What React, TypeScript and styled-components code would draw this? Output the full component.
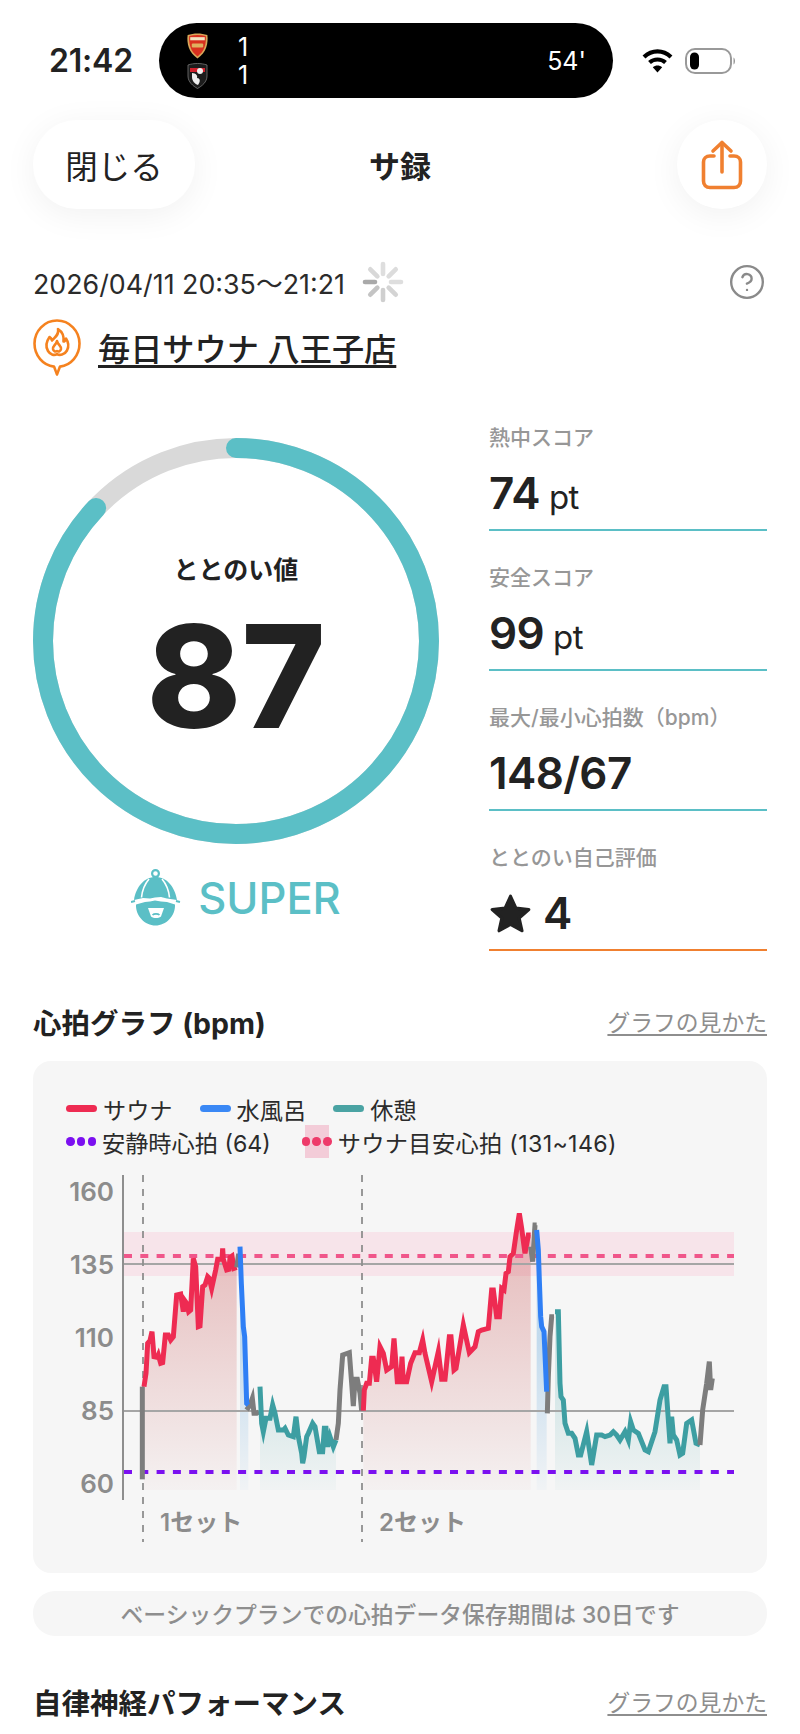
import React from "react";
import styled, { createGlobalStyle } from "styled-components";
import { CircleHelp } from "lucide-react";

const GlobalStyle = createGlobalStyle`
  html, body {
    margin: 0;
    padding: 0;
    background: #fff;
    overflow: hidden;
  }
  * { box-sizing: border-box; }
  body {
    font-family: Inter, "Noto Sans CJK JP", sans-serif;
    color: #222;
  }
`;

const Page = styled.div`
  width: 800px;
  height: 1734px;
  overflow: hidden;
  padding-top: 23px;
`;

const StatusBar = styled.div`
  height: 75px;
  display: flex;
  align-items: center;
  padding-left: 49px;
`;

const Clock = styled.div`
  width: 110px;
  font-size: 32px;
  font-weight: 600;
  letter-spacing: -0.2px;
`;

const Island = styled.div`
  width: 454px;
  height: 75px;
  border-radius: 38px;
  background: #000;
  color: #fff;
  display: flex;
  align-items: center;
  padding: 0 27px;
  font-size: 25px;
`;

const Crests = styled.div`
  display: flex;
  flex-direction: column;
  gap: 4px;
  width: 52px;
`;

const Scores = styled.div`
  display: flex;
  flex-direction: column;
  line-height: 28px;
  flex: 1;
`;

const StatusIcons = styled.div`
  margin-left: 29px;
  display: flex;
  align-items: center;
  gap: 12px;
`;

const TopBar = styled.header`
  margin-top: 22px;
  padding: 0 33px;
  height: 89px;
  display: grid;
  grid-template-columns: 1fr auto 1fr;
  align-items: center;
`;

const CloseButton = styled.div`
  width: 162px;
  height: 89px;
  border-radius: 44px;
  background: #fff;
  box-shadow: 0 6px 34px rgba(0, 0, 0, 0.06);
  display: flex;
  align-items: center;
  justify-content: center;
  font-size: 32.5px;
`;

const Title = styled.div`
  font-size: 31px;
  font-weight: 700;
`;

const ShareButton = styled.div`
  justify-self: end;
  width: 90px;
  height: 89px;
  border-radius: 45px;
  background: #fff;
  box-shadow: 0 6px 34px rgba(0, 0, 0, 0.06);
  display: flex;
  align-items: center;
  justify-content: center;
`;

const Content = styled.main`
  padding: 0 33px;
`;

const DateRow = styled.div`
  margin-top: 52px;
  height: 42px;
  display: flex;
  align-items: center;
  font-size: 26.8px;
  color: #2b2b2b;
`;

const Help = styled(CircleHelp)`
  margin-left: auto;
  margin-right: 1px;
  color: #8a8a8a;
`;

const Spinner = styled.svg`
  margin-left: 17px;
`;

const PlaceRow = styled.div`
  margin-top: 16px;
  display: flex;
  align-items: flex-start;
  gap: 17px;
  height: 56px;
`;

const PlaceName = styled.span`
  margin-top: 8px;
  font-size: 32.2px;
  font-weight: 500;
  line-height: 46px;
  text-decoration: underline;
  text-decoration-thickness: 3px;
  text-underline-offset: 4px;
  color: #222;
`;

const ScoreRow = styled.section`
  margin-top: 16px;
  display: flex;
  justify-content: space-between;
`;

const RingColumn = styled.div`
  width: 406px;
  padding-top: 46px;
`;

const RingWrap = styled.div`
  display: grid;
  width: 406px;
  height: 408px;
  > * {
    grid-area: 1 / 1;
  }
`;

const RingText = styled.div`
  display: flex;
  flex-direction: column;
  align-items: center;
`;

const RingLabel = styled.div`
  margin-top: 115px;
  font-size: 25px;
  font-weight: 700;
  line-height: 36px;
`;

const RingValue = styled.div`
  margin-top: 28px;
  font-size: 143px;
  font-weight: 800;
  line-height: 120px;
`;

const Grade = styled.div`
  margin-top: 24px;
  display: flex;
  justify-content: center;
  align-items: center;
  gap: 17px;
  color: #5bbfc6;
  font-size: 43.5px;
  font-weight: 500;
`;

const StatColumn = styled.div`
  width: 278px;
  display: flex;
  flex-direction: column;
`;

const Stat = styled.div<{ $accent: string }>`
  height: 140px;
  padding-top: 32px;
  border-bottom: 2px solid ${(p) => p.$accent};
`;

const StatLabel = styled.div`
  font-size: 21px;
  font-weight: 500;
  color: #979797;
  line-height: 30px;
`;

const StatValue = styled.div`
  margin-top: 14px;
  display: flex;
  align-items: baseline;
  gap: 9px;
  font-size: 44px;
  font-weight: 600;
  line-height: 52px;
  letter-spacing: -0.6px;
`;

const StatUnit = styled.span`
  font-size: 33px;
  font-weight: 400;
`;

const StarGlyph = styled.svg`
  align-self: center;
  margin-right: 2px;
`;

const SectionHead = styled.div<{ $top: number }>`
  margin-top: ${(p) => p.$top}px;
  height: 40px;
  display: flex;
  align-items: center;
  justify-content: space-between;
`;

const SectionTitle = styled.h2`
  margin: 0;
  font-size: 28.5px;
  font-weight: 700;
`;

const SectionLink = styled.span`
  font-size: 22.8px;
  color: #8e8e8e;
  text-decoration: underline;
  text-underline-offset: 3px;
`;

const ChartCard = styled.div`
  margin-top: 20px;
  height: 512px;
  background: #f6f6f6;
  border-radius: 18px;
  padding-top: 31px;
`;

const Legend = styled.div`
  padding-left: 33px;
  height: 78px;
  font-size: 23.2px;
  color: #2b2b2b;
`;

const LegendRow = styled.div<{ $gap: number }>`
  height: 33px;
  display: flex;
  align-items: center;
  gap: ${(p) => p.$gap}px;
`;

const LegendItem = styled.div`
  display: flex;
  align-items: center;
  gap: 6px;
`;

const LegendLine = styled.i<{ $color: string }>`
  display: block;
  width: 31px;
  height: 7px;
  border-radius: 4px;
  background: ${(p) => p.$color};
`;

const LegendDots = styled.i<{ $color: string; $band?: boolean }>`
  display: flex;
  width: 30px;
  height: ${(p) => (p.$band ? "33px" : "9px")};
  align-items: center;
  justify-content: space-between;
  background: ${(p) =>
    p.$band ? "linear-gradient(90deg, transparent 3px, #f3ccd8 3px, #f3ccd8 27px, transparent 27px)" : "none"};
  b {
    width: 8.5px;
    height: 8.5px;
    border-radius: 50%;
    background: ${(p) => p.$color};
  }
`;

const LegendRange = styled.span`
  letter-spacing: 0.35px;
`;

const ChartSvg = styled.svg`
  display: block;
`;

const Note = styled.div`
  margin-top: 18px;
  height: 45px;
  border-radius: 22px;
  background: #f6f6f6;
  color: #8e8e8e;
  font-size: 22.8px;
  font-weight: 500;
  display: flex;
  align-items: center;
  justify-content: center;
`;

type Pt = [number, number];
const z4 = (pts: Pt[]): Pt[] => pts.map(([x, y]) => [30 + x / 3, 1170 + y / 3]);
const z5 = (pts: Pt[]): Pt[] => pts.map(([x, y]) => [380 + x / 3, 1170 + y / 3]);
const str = (pts: Pt[]) => pts.map((p) => p.join(",")).join(" ");
const BASE = 1490;
const area = (pts: Pt[]) =>
  `${pts[0][0]},${BASE} ${str(pts)} ${pts[pts.length - 1][0]},${BASE}`;

const gray1 = z4([[337, 928], [337, 650]]);
const red1 = z4([[342, 650], [348, 610], [353, 520], [360, 512], [366, 485], [372, 560], [382, 562], [385, 555], [392, 580], [398, 578], [406, 495], [415, 495], [422, 510], [430, 500], [440, 375], [452, 372], [460, 425], [463, 390], [470, 400], [476, 425], [482, 420], [490, 265], [497, 290], [505, 470], [510, 468], [518, 350], [525, 345], [533, 320], [538, 325], [545, 355], [557, 300], [563, 268], [576, 268], [578, 235], [580, 268], [590, 300], [597, 298], [600, 262], [606, 258], [612, 295], [620, 292]]);
const gray2 = z4([[620, 292], [625, 258], [630, 258]]);
const blue1 = z4([[630, 230], [634, 340], [640, 470], [644, 500], [650, 700], [655, 705]]);
const gray3 = z4([[650, 720], [660, 705], [667, 685], [672, 730], [680, 730], [687, 725]]);
const teal1 = z4([[690, 650], [695, 760], [700, 785], [708, 745], [720, 745], [728, 705], [735, 730], [745, 780], [760, 780], [765, 775], [775, 795], [790, 800], [798, 740], [805, 800], [815, 850], [818, 880], [822, 860], [830, 800], [835, 790], [848, 760], [855, 770], [868, 845], [878, 845], [883, 775], [888, 775], [893, 830], [900, 800], [910, 830], [918, 810]]);
const gray4 = z4([[918, 810], [925, 760], [930, 660], [938, 555], [958, 548], [965, 640], [970, 708], [975, 628], [982, 628], [990, 670], [995, 722]]);
const red2 = [
  ...z4([[1000, 722], [1003, 660], [1010, 640], [1018, 640], [1025, 565], [1030, 565], [1040, 635], [1050, 530]]),
  ...z5([[10, 550], [20, 600], [35, 590], [42, 505], [52, 635], [62, 635], [66, 560], [70, 635], [80, 635], [92, 580], [105, 548], [118, 548], [128, 510], [135, 550], [155, 635], [175, 545], [185, 628], [195, 628], [208, 500], [213, 500], [222, 600], [228, 595], [250, 465], [268, 548], [285, 530], [295, 485], [305, 480], [325, 475], [335, 360], [340, 360], [350, 440], [358, 440], [365, 355], [372, 360], [378, 310], [385, 305], [390, 260], [400, 250], [410, 180], [418, 130], [425, 175], [435, 250], [445, 195], [452, 195]]),
];
const gray5 = z5([[452, 230], [458, 275], [465, 165], [470, 165]]);
const blue2 = z5([[470, 180], [475, 240], [478, 330], [482, 440], [485, 470], [492, 485], [500, 665]]);
const gray6 = z5([[502, 730], [505, 620], [510, 500], [515, 440], [522, 440]]);
const teal2 = z5([[525, 425], [535, 425], [540, 640], [543, 680], [550, 690], [555, 760], [565, 790], [575, 790], [585, 805], [595, 855], [602, 855], [620, 785], [635, 885], [650, 795], [665, 795], [675, 800], [690, 795], [700, 785], [710, 795], [720, 810], [735, 785], [745, 810], [752, 755], [760, 780], [775, 790], [795, 840], [805, 845], [815, 815], [825, 785], [840, 690], [852, 650], [858, 650], [870, 820], [875, 740], [880, 795], [890, 810], [900, 855], [908, 850], [920, 760], [935, 750], [948, 820], [960, 825]]);
const gray7 = z5([[960, 825], [968, 720], [980, 640], [988, 575], [992, 660], [997, 625]]);

const RED = "#ee2b52";
const BLUE = "#2f7ff5";
const TEAL = "#3d9ea2";
const GRAY = "#7d7d7d";

const traces: [Pt[], string][] = [
  [gray1, GRAY], [red1, RED], [gray2, GRAY], [gray3, GRAY], [blue1, BLUE], [teal1, TEAL], [gray4, GRAY],
  [red2, RED], [gray5, GRAY], [gray6, GRAY], [blue2, BLUE], [teal2, TEAL], [gray7, GRAY],
];

const yLabels: [string, number][] = [["160", 1201], ["135", 1274], ["110", 1347], ["85", 1420], ["60", 1493]];

function HeartChart() {
  return (
    <ChartSvg width={734} height={385} viewBox="33 1170 734 385">
      <defs>
        <linearGradient id="fillRed" gradientUnits="userSpaceOnUse" x1="0" y1="1230" x2="0" y2={BASE}>
          <stop offset="0" stopColor="#c85050" stopOpacity="0.36" />
          <stop offset="1" stopColor="#c85050" stopOpacity="0.03" />
        </linearGradient>
        <linearGradient id="fillBlue" gradientUnits="userSpaceOnUse" x1="0" y1="1340" x2="0" y2={BASE}>
          <stop offset="0" stopColor="#4a9ad8" stopOpacity="0.3" />
          <stop offset="1" stopColor="#4a9ad8" stopOpacity="0.03" />
        </linearGradient>
        <linearGradient id="fillTeal" gradientUnits="userSpaceOnUse" x1="0" y1="1390" x2="0" y2={BASE}>
          <stop offset="0" stopColor="#3d9ea2" stopOpacity="0.18" />
          <stop offset="1" stopColor="#3d9ea2" stopOpacity="0.03" />
        </linearGradient>
      </defs>

      <rect x={124} y={1232} width={610} height={44} fill="#f7e4ea" />

      <polygon points={area(red1)} fill="url(#fillRed)" />
      <polygon points={area(red2)} fill="url(#fillRed)" />
      <polygon points={area(blue1)} fill="url(#fillBlue)" />
      <polygon points={area(blue2)} fill="url(#fillBlue)" />
      <polygon points={area(teal1)} fill="url(#fillTeal)" />
      <polygon points={area(teal2)} fill="url(#fillTeal)" />

      <line x1={124} x2={734} y1={1264} y2={1264} stroke="#a5a5a5" strokeWidth={2} />
      <line x1={124} x2={734} y1={1411} y2={1411} stroke="#a5a5a5" strokeWidth={2} />
      <line x1={123} x2={123} y1={1175} y2={1500} stroke="#8e8e8e" strokeWidth={2} />
      <line x1={143} x2={143} y1={1175} y2={1542} stroke="#8e8e8e" strokeWidth={1.8} strokeDasharray="7 7" />
      <line x1={362} x2={362} y1={1175} y2={1542} stroke="#8e8e8e" strokeWidth={1.8} strokeDasharray="7 7" />

      <line x1={124} x2={734} y1={1256} y2={1256} stroke="#f0568a" strokeWidth={4} strokeDasharray="8 8.3" />
      <line x1={124} x2={734} y1={1472} y2={1472} stroke="#7b10f0" strokeWidth={4} strokeDasharray="8 8.3" />

      {traces.map(([pts, color], i) => (
        <polyline key={i} points={str(pts)} fill="none" stroke={color} strokeWidth={5} strokeMiterlimit={6} />
      ))}

      {yLabels.map(([t, y]) => (
        <text key={t} x={114} y={y} textAnchor="end" fontSize={26} fontWeight={600} fill="#8c8c8c">
          {t}
        </text>
      ))}
      <text x={160} y={1531} fontSize={24} fontWeight={600} fill="#8c8c8c">1セット</text>
      <text x={379} y={1531} fontSize={24} fontWeight={600} fill="#8c8c8c">2セット</text>
    </ChartSvg>
  );
}

function ArsenalCrest() {
  return (
    <svg width={23} height={26} viewBox="0 0 21 25">
      <path d="M1 2 C7 0 14 0 20 2 C21 10 19 19 10.5 24.5 C2 19 0 10 1 2 Z" fill="#d8a85a" />
      <path d="M2.5 3 C8 1.6 13 1.6 18.5 3 C19 10 17.5 18 10.5 22.5 C3.5 18 2 10 2.5 3 Z" fill="#d9301f" />
      <rect x={3.5} y={4} width={14} height={3} fill="#f3e3c0" />
      <rect x={5} y={10} width={11} height={4} rx={1} fill="#e0b060" />
    </svg>
  );
}

function BournemouthCrest() {
  return (
    <svg width={23} height={26} viewBox="0 0 21 26">
      <path d="M1 2 C7 0 14 0 20 2 L20 13 C20 19 15 23 10.5 25.5 C6 23 1 19 1 13 Z" fill="#1c1c1c" stroke="#777" strokeWidth={0.8} />
      <path d="M3 5 L18 5 L18 9 L3 9 Z" fill="#d1202c" />
      <circle cx={13} cy={8} r={3} fill="#f2f2f2" />
      <path d="M5 10 C9 10 11 13 10 15 C13 15 14 18 11 22 C8 21 5 18 5 14 Z" fill="#eeeeee" />
    </svg>
  );
}

function WifiIcon() {
  return (
    <svg width={31} height={24} viewBox="0 0 31 24" fill="none" stroke="#000" strokeWidth={4.2}>
      <path d="M2 8 C10 0.5 21 0.5 29 8" />
      <path d="M7.5 13.5 C12 9.5 19 9.5 23.5 13.5" />
      <path d="M15.5 23.5 L10.8 18.2 C13.5 16 17.5 16 20.2 18.2 Z" fill="#000" stroke="none" />
    </svg>
  );
}

function BatteryIcon() {
  return (
    <svg width={51} height={26} viewBox="0 0 51 26">
      <rect x={1} y={1} width={45} height={24} rx={9} fill="none" stroke="#999" strokeWidth={2} />
      <rect x={5} y={4.5} width={9} height={17} rx={4.5} fill="#000" />
      <path d="M48.5 9.5 C50.5 10.5 50.5 15.5 48.5 16.5 Z" fill="#999" />
    </svg>
  );
}

function ShareIcon() {
  return (
    <svg width={44} height={50} viewBox="0 0 44 50" fill="none" stroke="#f08030" strokeWidth={3.6} strokeLinecap="round" strokeLinejoin="round">
      <path d="M14 16 H10 C6 16 3.5 18.5 3.5 22 V41 C3.5 45 6 47.5 10 47.5 H34 C38 47.5 40.5 45 40.5 41 V22 C40.5 18.5 38 16 34 16 H30" />
      <path d="M22 32 V3" />
      <path d="M13 11 L22 2.5 L31 11" />
    </svg>
  );
}

function SpinnerIcon() {
  const colors = ["#dedede", "#dcdcdc", "#dedede", "#d4d4d4", "#cfcfcf", "#c4c4c4", "#a9a9a9", "#d8d8d8"];
  return (
    <Spinner width={42} height={42} viewBox="-21 -21 42 42">
      {colors.map((c, i) => (
        <line key={i} x1={0} y1={-8} x2={0} y2={-18} stroke={c} strokeWidth={4.6} strokeLinecap="round" transform={`rotate(${i * 45})`} />
      ))}
    </Spinner>
  );
}

function PlaceIcon() {
  return (
    <svg width={48} height={57} viewBox="0 0 48 57" fill="none" stroke="#f5821f" strokeWidth={2.6} strokeLinejoin="round" strokeLinecap="round">
      <path d="M21 47.6 C10 46.4 1.5 36.5 1.5 24.5 C1.5 12 11.5 1.5 24 1.5 C36.5 1.5 46.5 12 46.5 24.5 C46.5 36.5 38 46.4 27 47.6 C26 50 25 53 24 55.5 C23 53 22 50 21 47.6 Z" />
      <path d="M25 10 C26.5 15.5 22 18 19 21.5 C18.5 19.5 17.5 18.5 16.5 18 C13 23 12.5 28 15 32 C17.5 36 21.5 36.8 24 35 C26.5 36.8 31.5 36 34 31.5 C36 27.5 35 22.5 33 19.5 C32.5 21 31.5 22.5 30.5 22.5 C31 17.5 29 12.5 25 10 Z" />
      <path d="M24 22 C25 26 28.5 27 28 30 C27.5 32.5 25.5 33 24 32 C22.5 33 20.5 32.5 20 30 C19.5 27 23 26 24 22 Z" />
    </svg>
  );
}

function MascotIcon() {
  return (
    <svg width={50} height={58} viewBox="0 0 50 58">
      <circle cx={24.5} cy={4.5} r={3.4} fill="none" stroke="#5bbfc6" strokeWidth={2.2} />
      <path d="M3 31 C5 18 13 8 24.5 8 C36 8 44 18 46 31 L36 29.5 L30 28 L24 28.5 L19 29.5 L12 29 Z" fill="#5bbfc6" />
      <path d="M18 10 C13 16 11 23 10.5 28.5 M31 10 C36 16 38 23 38.5 28.5" stroke="#fff" strokeWidth={1.6} fill="none" />
      <path d="M0 33 L4 32 M45 32 L49 33" stroke="#5bbfc6" strokeWidth={2} />
      <path d="M5 35.5 L14 33 L19 32.5 L24 31.5 L30 32.5 L36 33 L44 35.5 C44.5 47 35 56.5 24.5 56.5 C14 56.5 4.5 47 5 35.5 Z" fill="#5bbfc6" />
      <path d="M17 39 H33 L30 47.5 C27 49.5 23 49.5 20 47.5 Z" fill="#fff" />
      <path d="M21.5 46 C23 44.5 27 44.5 28.5 46" stroke="#5bbfc6" strokeWidth={1.6} fill="none" />
    </svg>
  );
}

function StarIcon() {
  return (
    <StarGlyph width={43} height={41} viewBox="0 0 40 38">
      <path
        d="M20 3 L25 14 L37 15.3 L28 23.3 L30.6 35 L20 29 L9.4 35 L12 23.3 L3 15.3 L15 14 Z"
        fill="#222"
        stroke="#222"
        strokeWidth={3}
        strokeLinejoin="round"
      />
    </StarGlyph>
  );
}

function Ring() {
  return (
    <svg width={406} height={408} viewBox="0 0 406 408">
      <circle cx={203} cy={204} r={193} fill="none" stroke="#d9d9d9" strokeWidth={20} />
      <circle
        cx={203}
        cy={204}
        r={193}
        fill="none"
        stroke="#5bbfc6"
        strokeWidth={20}
        strokeLinecap="round"
        pathLength={100}
        strokeDasharray="87.1 100"
        transform="rotate(-90 203 204)"
      />
    </svg>
  );
}

const stats = [
  { label: "熱中スコア", value: "74", unit: "pt" },
  { label: "安全スコア", value: "99", unit: "pt" },
  { label: "最大/最小心拍数（bpm）", value: "148/67" },
];

export default function App() {
  return (
    <>
      <GlobalStyle />
      <Page>
        <StatusBar>
          <Clock>21:42</Clock>
          <Island>
            <Crests>
              <ArsenalCrest />
              <BournemouthCrest />
            </Crests>
            <Scores>
              <span>1</span>
              <span>1</span>
            </Scores>
            <span>54'</span>
          </Island>
          <StatusIcons>
            <WifiIcon />
            <BatteryIcon />
          </StatusIcons>
        </StatusBar>

        <TopBar>
          <CloseButton>閉じる</CloseButton>
          <Title>サ録</Title>
          <ShareButton>
            <ShareIcon />
          </ShareButton>
        </TopBar>

        <Content>
          <DateRow>
            2026/04/11 20:35～21:21
            <SpinnerIcon />
            <Help size={38} strokeWidth={1.5} />
          </DateRow>
          <PlaceRow>
            <PlaceIcon />
            <PlaceName>毎日サウナ 八王子店</PlaceName>
          </PlaceRow>

          <ScoreRow>
            <RingColumn>
              <RingWrap>
                <Ring />
                <RingText>
                  <RingLabel>ととのい値</RingLabel>
                  <RingValue>87</RingValue>
                </RingText>
              </RingWrap>
              <Grade>
                <MascotIcon />
                SUPER
              </Grade>
            </RingColumn>
            <StatColumn>
              {stats.map((s) => (
                <Stat key={s.label} $accent="#5bbfc6">
                  <StatLabel>{s.label}</StatLabel>
                  <StatValue>
                    {s.value}
                    {s.unit && <StatUnit>{s.unit}</StatUnit>}
                  </StatValue>
                </Stat>
              ))}
              <Stat $accent="#f08030">
                <StatLabel>ととのい自己評価</StatLabel>
                <StatValue>
                  <StarIcon />4
                </StatValue>
              </Stat>
            </StatColumn>
          </ScoreRow>

          <SectionHead $top={50}>
            <SectionTitle>心拍グラフ (bpm)</SectionTitle>
            <SectionLink>グラフの見かた</SectionLink>
          </SectionHead>

          <ChartCard>
            <Legend>
              <LegendRow $gap={27}>
                <LegendItem><LegendLine $color={RED} />サウナ</LegendItem>
                <LegendItem><LegendLine $color="#3a88f5" />水風呂</LegendItem>
                <LegendItem><LegendLine $color="#4aa3a3" />休憩</LegendItem>
              </LegendRow>
              <LegendRow $gap={31}>
                <LegendItem>
                  <LegendDots $color="#7b10f0"><b /><b /><b /></LegendDots>
                  安静時心拍 (64)
                </LegendItem>
                <LegendItem>
                  <LegendDots $color="#ee3a6a" $band><b /><b /><b /></LegendDots>
                  <LegendRange>サウナ目安心拍 (131~146)</LegendRange>
                </LegendItem>
              </LegendRow>
            </Legend>
            <HeartChart />
          </ChartCard>

          <Note>ベーシックプランでの心拍データ保存期間は 30日です</Note>

          <SectionHead $top={45}>
            <SectionTitle>自律神経パフォーマンス</SectionTitle>
            <SectionLink>グラフの見かた</SectionLink>
          </SectionHead>
        </Content>
      </Page>
    </>
  );
}
